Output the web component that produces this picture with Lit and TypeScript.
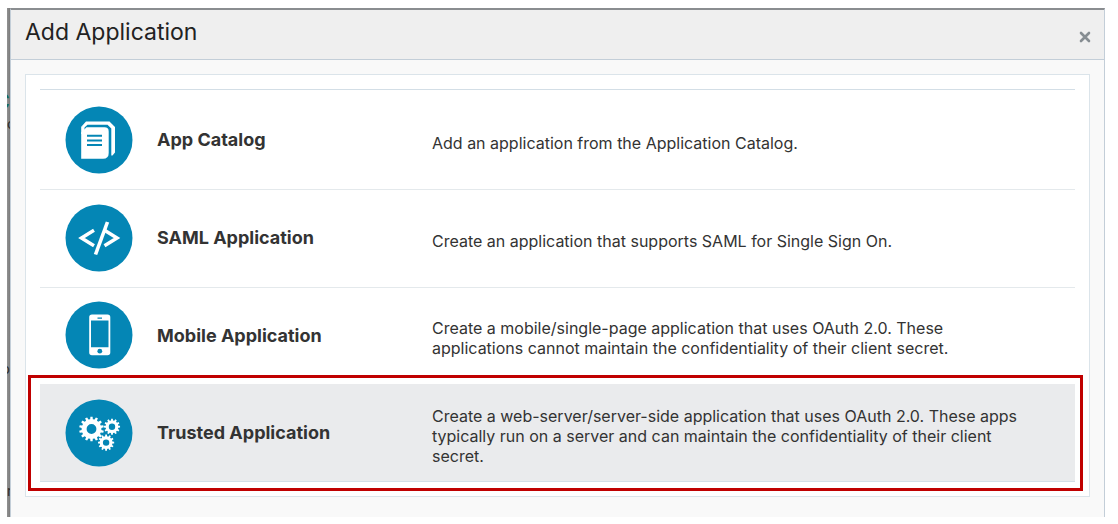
import { LitElement, html, css, svg } from "lit";
import { customElement, property } from "lit/decorators.js";

type IconName = "catalog" | "code" | "mobile" | "gears";

interface AppType {
  icon: IconName;
  title: string;
  text: string;
  selected?: boolean;
}

const APP_TYPES: AppType[] = [
  {
    icon: "catalog",
    title: "App Catalog",
    text: "Add an application from the Application Catalog.",
  },
  {
    icon: "code",
    title: "SAML Application",
    text: "Create an application that supports SAML for Single Sign On.",
  },
  {
    icon: "mobile",
    title: "Mobile Application",
    text: "Create a mobile/single-page application that uses OAuth 2.0. These applications cannot maintain the confidentiality of their client secret.",
  },
  {
    icon: "gears",
    title: "Trusted Application",
    text: "Create a web-server/server-side application that uses OAuth 2.0. These apps typically run on a server and can maintain the confidentiality of their client secret.",
    selected: true,
  },
];

/** Outline of a toothed wheel with a round hole, centred on cx, cy. */
function gear(cx: number, cy: number, outer: number, root: number, hole: number, teeth: number) {
  const step = (Math.PI * 2) / teeth;
  const pts: string[] = [];
  for (let i = 0; i < teeth; i++) {
    const a = i * step - Math.PI / 2;
    for (const [r, o] of [[root, -0.3], [outer, -0.2], [outer, 0.2], [root, 0.3]]) {
      pts.push(`${(cx + r * Math.cos(a + o * step)).toFixed(2)} ${(cy + r * Math.sin(a + o * step)).toFixed(2)}`);
    }
  }
  return `M${pts.join("L")}ZM${cx - hole} ${cy}a${hole} ${hole} 0 1 0 ${hole * 2} 0a${hole} ${hole} 0 1 0 ${-hole * 2} 0Z`;
}

const GLYPHS = {
  catalog: svg`
    <path fill="#fff" d="M16.5 20.5L21 15.5H44.5L50 21V46.5L47.5 49.5H46.3V22.5L42.5 18.7H22.5L19.5 21.5Z"/>
    <path fill="#fff" d="M16.2 26.5L21.5 21.3H39.5Q43.7 21.3 43.7 25.5V47Q43.7 52.8 38 52.8H16.2Z"/>
    <path fill="#fff" d="M16.2 20.5H19.5V28H16.2Z"/>
    <path stroke="#0486b5" stroke-width="2" d="M22 29.7H37M22 34.4H37M22 39.1H37"/>`,
  code: svg`
    <path fill="none" stroke="#fff" stroke-width="3.5" d="M29 26.3L16.5 34L29 41.7M39.5 26.3L52 34L39.5 41.7"/>
    <path fill="none" stroke="#fff" stroke-width="3.6" d="M42.5 18L30.5 50.5"/>`,
  mobile: svg`
    <path fill="#fff" fill-rule="evenodd" d="M27.5 13.5H42.5Q45.3 13.5 45.3 16.3V51.5Q45.3 54.3 42.5 54.3H27Q24.2 54.3 24.2 51.5V16.3Q24.2 13.5 27 13.5ZM26 19.5V46.3H43.5V19.5ZM32.5 16.5V17.7H37V16.5Z"/>
    <circle cx="34.8" cy="50.2" r="2.4" fill="#0486b5"/>`,
  gears: svg`
    <path fill="#fff" fill-rule="evenodd" d=${gear(26.5, 30, 12.4, 9.9, 4.9, 14)} />
    <path fill="#fff" fill-rule="evenodd" d=${gear(47, 27.7, 8.1, 6.4, 3.2, 12)} />
    <path fill="#fff" fill-rule="evenodd" d=${gear(41.1, 43.6, 8.1, 6.4, 3.2, 12)} />`,
};

@customElement("app-type-icon")
export class AppTypeIcon extends LitElement {
  @property() name: IconName = "catalog";

  static styles = css`
    :host {
      display: block;
    }
    .icon {
      display: block;
      width: 68px;
      height: 68px;
    }
  `;

  render() {
    return html`<svg class="icon" viewBox="0 0 68 68" aria-hidden="true">
      <circle cx="34" cy="34" r="33.5" fill="#0486b5" />
      ${GLYPHS[this.name]}
    </svg>`;
  }
}

@customElement("app-root")
export class AppRoot extends LitElement {
  static styles = css`
    :host {
      display: flex;
      box-sizing: border-box;
      min-height: 100vh;
      padding: 8px 13px 7px 7px;
      background: #fff;
      font-family: Inter, "Liberation Sans", sans-serif;
      color: #333;
    }
    .backdrop {
      position: relative;
      flex: none;
      width: 3px;
      overflow: hidden;
      background: linear-gradient(90deg, #929292, #7c7c7c);
    }
    .peek {
      position: absolute;
      font-size: 14px;
      line-height: 16px;
      color: #2c2c2c;
    }
    .peek-heading {
      top: 83px;
      right: 0;
      font-size: 22px;
      line-height: 20px;
      color: #0d6a5c;
    }
    .peek-a { top: 108px; left: 0; }
    .peek-b { top: 353px; right: 0; }
    .peek-c { top: 475px; left: 0; }
    .dialog {
      flex: 1;
      min-width: 0;
      background: #f9f9f9;
      border: 1px solid #c3ced8;
      border-top: 2px solid #8a8d90;
      border-bottom: 0;
    }
    .header {
      display: flex;
      align-items: center;
      justify-content: space-between;
      height: 49px;
      padding: 0 12px 0 14px;
      background: #efefef;
      border-bottom: 1px solid #c3ced8;
    }
    .title {
      margin: 0 0 6px;
      font-size: 23px;
      line-height: 28px;
      font-weight: 400;
      color: #222;
    }
    .close {
      margin: 4px 0 0;
      padding: 0;
      border: 0;
      background: none;
      cursor: pointer;
    }
    .close-mark {
      display: block;
      width: 14px;
      height: 14px;
    }
    .panel {
      margin: 14px 14px 20px;
      padding: 14px;
      background: #fff;
      border: 1px solid #dbe4ea;
    }
    .list {
      margin: 0;
      padding: 0;
      list-style: none;
      border-top: 1px solid #d3dee6;
    }
    .item {
      position: relative;
      border-bottom: 1px solid #e4e9ec;
    }
    .item:first-child .choice {
      min-height: 99px;
      padding-bottom: 0;
    }
    .item:nth-child(3) {
      border-bottom: 0;
    }
    .item:nth-child(3) .choice {
      min-height: 96px;
    }
    .item.selected {
      background: #eaebed;
      border-color: #d3dee6;
    }
    .item.selected .choice {
      padding-bottom: 0;
    }
    .item.selected::after {
      content: "";
      position: absolute;
      inset: -9px -8px -10px -12px;
      border: 3px solid #c00000;
      pointer-events: none;
    }
    .choice {
      display: grid;
      grid-template-columns: 68px 251px minmax(0, 588px);
      column-gap: 24px;
      align-items: center;
      box-sizing: border-box;
      width: 100%;
      min-height: 97px;
      padding: 0 24px 2px 25px;
      border: 0;
      background: none;
      color: inherit;
      font: inherit;
      text-align: left;
      cursor: pointer;
    }
    .name {
      padding-top: 1px;
      font-size: 18px;
      line-height: 24px;
      font-weight: 700;
    }
    .text {
      padding-top: 6px;
      font-size: 16px;
      line-height: 20px;
    }
  `;

  render() {
    return html`
      <div class="backdrop" aria-hidden="true">
        <span class="peek peek-heading">C</span>
        <span class="peek peek-a">c</span>
        <span class="peek peek-b">o</span>
        <span class="peek peek-c">r</span>
      </div>
      <section class="dialog" role="dialog" aria-labelledby="dialog-title">
        <header class="header">
          <h1 class="title" id="dialog-title">Add Application</h1>
          <button class="close" type="button" aria-label="Close">
            <svg class="close-mark" viewBox="0 0 14 14" aria-hidden="true">
              <path d="M3 3L11 11M11 3L3 11" stroke="#868d92" stroke-width="2.6" stroke-linecap="round" />
            </svg>
          </button>
        </header>
        <div class="panel">
          <ul class="list">
            ${APP_TYPES.map(
              (t) => html`<li class="item ${t.selected ? "selected" : ""}">
                <button class="choice" type="button">
                  <app-type-icon name=${t.icon}></app-type-icon>
                  <span class="name">${t.title}</span>
                  <span class="text">${t.text}</span>
                </button>
              </li>`
            )}
          </ul>
        </div>
      </section>
    `;
  }
}
